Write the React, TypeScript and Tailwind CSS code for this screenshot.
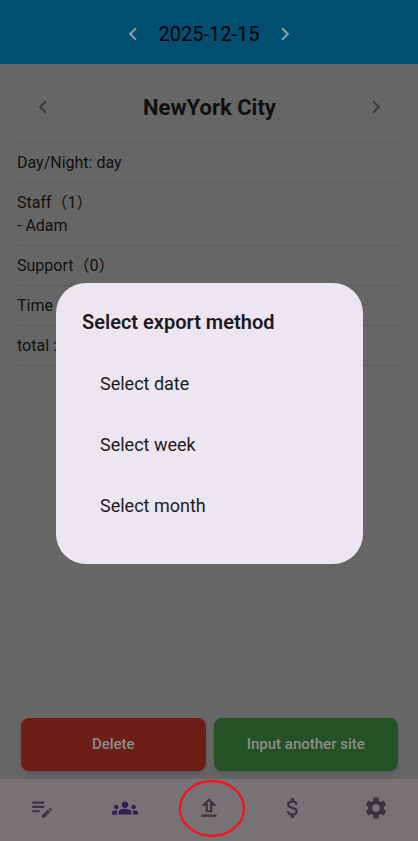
import type { ReactNode } from "react";
import {
  MdAttachMoney,
  MdChevronLeft,
  MdChevronRight,
  MdEditNote,
  MdGroups,
  MdOutlineUpload,
  MdSettings,
} from "react-icons/md";

const tabs = [
  { label: "Input", icon: MdEditNote, color: "text-[#38363b]" },
  { label: "Staff", icon: MdGroups, color: "text-[#2c2152]" },
  { label: "Export", icon: MdOutlineUpload, color: "text-[#38363b]", marked: true },
  { label: "Cost", icon: MdAttachMoney, color: "text-[#38363b]" },
  { label: "Settings", icon: MdSettings, color: "text-[#38363b]" },
];

const exportOptions = ["Select date", "Select week", "Select month"];

function Row({ children }: { children: ReactNode }) {
  return <div className="border-b border-[#5c5c5c] py-2">{children}</div>;
}

export default function App() {
  return (
    <div className="flex min-h-screen flex-col bg-[#666666] font-[Roboto,'Noto_Sans_CJK_JP',sans-serif] text-[#111111]">
      <header className="flex h-16 items-center justify-center gap-[13px] bg-[#004e70] pt-1">
        <button aria-label="Previous day" className="text-[#8b9aa2]">
          <MdChevronLeft size={26} />
        </button>
        <span className="text-xl text-black">2025-12-15</span>
        <button aria-label="Next day" className="text-[#8b9aa2]">
          <MdChevronRight size={26} />
        </button>
      </header>

      <main className="flex flex-1 flex-col pr-4 pl-[17px]">
        <div className="flex h-[79px] items-center justify-between border-b border-[#5c5c5c] px-[13px] pt-2">
          <button aria-label="Previous site" className="text-[#3d3d3d]">
            <MdChevronLeft size={26} />
          </button>
          <h1 className="text-[22px] font-bold">NewYork City</h1>
          <button aria-label="Next site" className="text-[#3d3d3d]">
            <MdChevronRight size={26} />
          </button>
        </div>

        <div className="text-base leading-[23px]">
          <Row>Day/Night: day</Row>
          <Row>
            <p>Staff（1）</p>
            <p>- Adam</p>
          </Row>
          <Row>Support（0）</Row>
          <Row>Time :</Row>
          <Row>total :</Row>
        </div>

        <div className="mt-auto flex gap-2 px-1 pb-2 text-[15px] font-medium text-[#8c8c8c]">
          <button className="h-[53px] flex-1 rounded-lg bg-[#6e1f19] shadow-md">Delete</button>
          <button className="h-[53px] flex-1 rounded-lg bg-[#245226] shadow-md">Input another site</button>
        </div>
      </main>

      <nav className="flex h-[62px] items-center bg-[#777276]">
        {tabs.map(({ label, icon: Icon, color, marked }) => (
          <button
            key={label}
            aria-label={label}
            className={`relative flex h-full flex-1 items-center justify-center pb-1 ${color}`}
          >
            <Icon size={26} />
            {marked && (
              <svg viewBox="0 0 76 60" className="absolute h-[60px] w-[76px]" fill="none">
                <ellipse cx="41" cy="30.5" rx="32" ry="27.5" stroke="#f5141d" strokeWidth="2.3" />
              </svg>
            )}
          </button>
        ))}
      </nav>

      <div className="fixed inset-0 flex items-center justify-center pt-[6px] pr-[55px] pl-14">
        <div
          role="dialog"
          aria-labelledby="export-title"
          className="w-full rounded-[30px] bg-[#ebe6f0] px-[26px] pt-6 pb-7 text-[#1d1b20]"
        >
          <h2 id="export-title" className="text-xl leading-[30px] font-semibold">
            Select export method
          </h2>
          <div className="mt-4 flex flex-col">
            {exportOptions.map((option) => (
              <button key={option} className="h-[61px] px-[18px] text-left text-lg">
                {option}
              </button>
            ))}
          </div>
        </div>
      </div>
    </div>
  );
}
